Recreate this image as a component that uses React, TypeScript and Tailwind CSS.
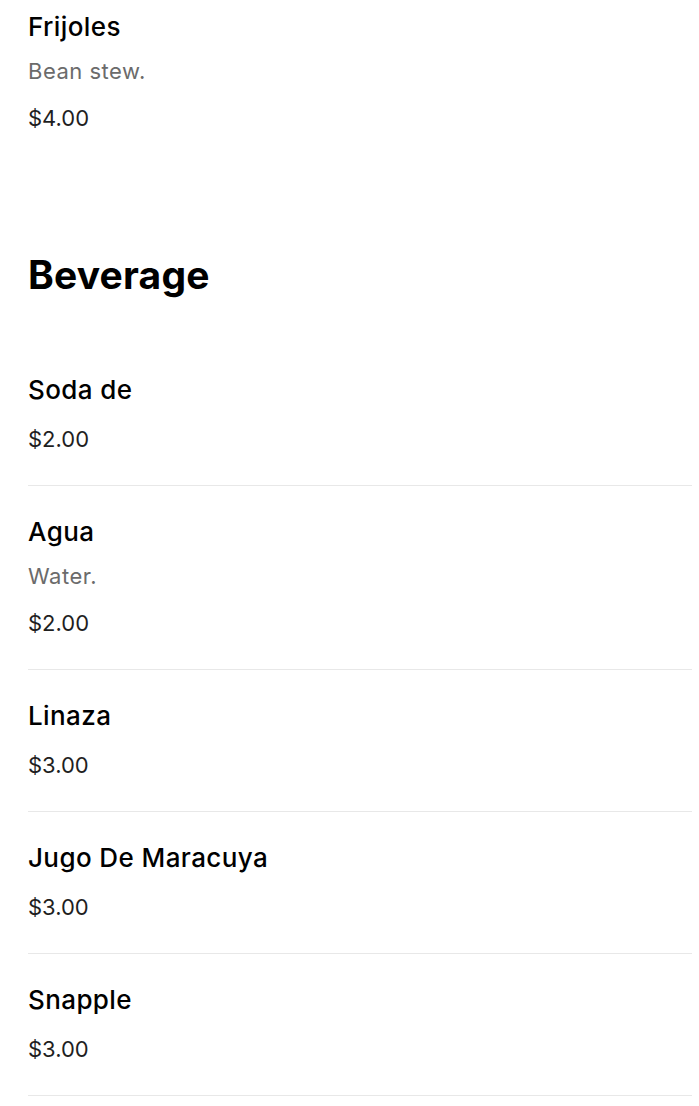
import React from "react";

interface MenuItem {
  name: string;
  description?: string;
  price: string;
}

const beverages: MenuItem[] = [
  { name: "Soda de", price: "$2.00" },
  { name: "Agua", description: "Water.", price: "$2.00" },
  { name: "Linaza", price: "$3.00" },
  { name: "Jugo De Maracuya", price: "$3.00" },
  { name: "Snapple", price: "$3.00" },
];

const ItemBody: React.FC<{ item: MenuItem }> = ({ item }) => (
  <>
    <div className="text-[26px] leading-[32px] font-medium text-black tracking-[0.4px]">{item.name}</div>
    {item.description && (
      <div className="mt-[14px] text-[22px] leading-[28px] text-[#6b6b6b] tracking-[0.5px]">
        {item.description}
      </div>
    )}
    <div className="mt-[19px] text-[22px] leading-[28px] text-[#1f1f1f]">{item.price}</div>
  </>
);

export default function App() {
  return (
    <div className="min-h-screen bg-white pl-[28px] pr-[7px] font-['Inter',sans-serif]">
      <div className="pt-[11px]">
        <ItemBody item={{ name: "Frijoles", description: "Bean stew.", price: "$4.00" }} />
      </div>

      <h2 className="mt-[121px] text-[39px] leading-[44px] font-bold text-black tracking-[0.2px]">
        Beverage
      </h2>

      <ul className="mt-[46px]">
        {beverages.map((item, i) => (
          <li
            key={i}
            className={`border-b border-[#e8e8e8] pb-[32px] ${i === 0 ? "pt-[31px]" : "pt-[30px]"}`}
          >
            <ItemBody item={item} />
          </li>
        ))}
      </ul>
    </div>
  );
}
